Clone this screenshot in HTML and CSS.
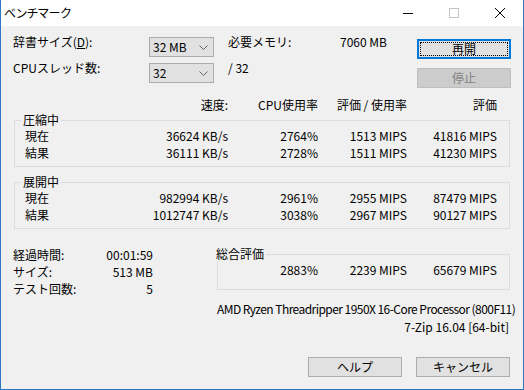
FILE: index.html
```html
<!DOCTYPE html>
<html>
<head>
    <title>ベンチマーク</title>
    <meta charset="utf-8" />

    <link rel="stylesheet" href="styles.css">

</head>
<body>

    <div id="window">

        <div class="title_bar">
            <span class="title_text">ベンチマーク</span>
            <div class="caption_buttons">
                <span class="caption_btn">
                    <svg width="10" height="10" viewBox="0 0 10 10"><line x1="0" y1="5.5" x2="10" y2="5.5" stroke="#000" stroke-width="1" /></svg>
                </span>
                <span class="caption_btn">
                    <svg width="10" height="10" viewBox="0 0 10 10"><rect x="0.5" y="0.5" width="9" height="9" fill="none" stroke="#c4c4c4" stroke-width="1" /></svg>
                </span>
                <span class="caption_btn">
                    <svg width="10" height="10" viewBox="0 0 10 10"><path d="M0 0 L10 10 M10 0 L0 10" stroke="#000" stroke-width="1" /></svg>
                </span>
            </div>
        </div>

        <div class="client">

            <div class="top_area">
                <div class="top_grid">
                    <span class="top_label">辞書サイズ(<u>D</u>):</span>
                    <div class="combo">
                        <span>32 MB</span>
                        <svg width="9" height="5" viewBox="0 0 9 5"><path d="M0.5 0.5 L4.5 4.5 L8.5 0.5" fill="none" stroke="#606060" stroke-width="1" /></svg>
                    </div>
                    <div class="mem_info">
                        <span>必要メモリ:</span>
                        <span>7060 MB</span>
                    </div>

                    <span class="top_label">CPUスレッド数:</span>
                    <div class="combo">
                        <span>32</span>
                        <svg width="9" height="5" viewBox="0 0 9 5"><path d="M0.5 0.5 L4.5 4.5 L8.5 0.5" fill="none" stroke="#606060" stroke-width="1" /></svg>
                    </div>
                    <div class="mem_info">
                        <span>/ 32</span>
                    </div>
                </div>

                <div class="top_buttons">
                    <button class="btn btn_default"><span class="focus_rect">再開</span></button>
                    <button class="btn" disabled>停止</button>
                </div>
            </div>

            <div class="results">
                <div class="cols head_row">
                    <span></span>
                    <span class="num">速度:</span>
                    <span class="num">CPU使用率</span>
                    <span class="num">評価 / 使用率</span>
                    <span class="num">評価</span>
                </div>

                <fieldset class="group">
                    <legend>圧縮中</legend>
                    <div class="cols">
                        <span>現在</span>
                        <span class="num">36624 KB/s</span>
                        <span class="num">2764%</span>
                        <span class="num">1513 MIPS</span>
                        <span class="num">41816 MIPS</span>
                    </div>
                    <div class="cols">
                        <span>結果</span>
                        <span class="num">36111 KB/s</span>
                        <span class="num">2728%</span>
                        <span class="num">1511 MIPS</span>
                        <span class="num">41230 MIPS</span>
                    </div>
                </fieldset>

                <fieldset class="group">
                    <legend>展開中</legend>
                    <div class="cols">
                        <span>現在</span>
                        <span class="num">982994 KB/s</span>
                        <span class="num">2961%</span>
                        <span class="num">2955 MIPS</span>
                        <span class="num">87479 MIPS</span>
                    </div>
                    <div class="cols">
                        <span>結果</span>
                        <span class="num">1012747 KB/s</span>
                        <span class="num">3038%</span>
                        <span class="num">2967 MIPS</span>
                        <span class="num">90127 MIPS</span>
                    </div>
                </fieldset>
            </div>

            <div class="bottom_area">
                <div class="stats">
                    <span>経過時間:</span>
                    <span class="num">00:01:59</span>
                    <span>サイズ:</span>
                    <span class="num">513 MB</span>
                    <span>テスト回数:</span>
                    <span class="num">5</span>
                </div>

                <fieldset class="group total_group">
                    <legend>総合評価</legend>
                    <div class="total_cols">
                        <span class="num">2883%</span>
                        <span class="num">2239 MIPS</span>
                        <span class="num">65679 MIPS</span>
                    </div>
                </fieldset>
            </div>

            <div class="cpu_line">AMD Ryzen Threadripper 1950X 16-Core Processor (800F11)</div>
            <div class="version_line">7-Zip 16.04 [64-bit]</div>

            <div class="footer">
                <button class="btn">ヘルプ</button>
                <button class="btn">キャンセル</button>
            </div>

        </div>

    </div>

</body>
</html>
```

FILE: styles.css
```css
body {
    margin: 0;
    font-family: "Noto Sans CJK JP", "Liberation Sans", sans-serif;
    font-size: 12px;
    color: #000;
}

#window {
    width: 522px;
    height: 389px;
    border: 1px solid #2b78c4;
    border-top: none;
    background: #f0f0f0;
    display: flex;
    flex-direction: column;
}

.title_bar {
    height: 26px;
    flex-shrink: 0;
    background: #fff;
    display: flex;
    align-items: center;
    justify-content: space-between;
}

.title_text {
    padding-left: 3px;
    font-feature-settings: "palt";
    line-height: 16px;
}

.caption_buttons {
    display: flex;
    height: 26px;
}

.caption_btn {
    width: 46px;
    display: flex;
    align-items: center;
    justify-content: center;
}

.client {
    padding: 0 13px 0 12px;
}

/* top settings */

.top_area {
    display: flex;
}

.top_grid {
    display: grid;
    grid-template-columns: 136px 65px 173px;
    grid-auto-rows: 20px;
    row-gap: 6px;
    padding-top: 11px;
    line-height: 10px;
}

.combo {
    height: 20px;
    box-sizing: border-box;
    border: 1px solid #acacac;
    background: #e1e1e1;
    display: flex;
    align-items: center;
    justify-content: space-between;
    padding: 0 5px 0 3px;
    line-height: 16px;
}

.mem_info {
    display: flex;
    justify-content: space-between;
    padding-left: 14px;
}

.top_buttons {
    margin-left: 30px;
    padding-top: 13px;
    display: flex;
    flex-direction: column;
    gap: 9px;
}

.btn {
    width: 94px;
    height: 20px;
    box-sizing: border-box;
    border: 1px solid #adadad;
    background: #e1e1e1;
    font-family: "Noto Sans CJK JP", "Liberation Sans", sans-serif;
    font-size: 12px;
    line-height: 16px;
    color: #000;
    padding: 0;
}

.btn_default {
    border: 2px solid #0078d7;
    padding: 1px;
}

.focus_rect {
    display: block;
    height: 100%;
    box-sizing: border-box;
    border: 1px dotted #000;
    line-height: 12px;
}

.btn:disabled {
    background: #cccccc;
    border-color: #bfbfbf;
    color: #838383;
}

/* results table */

.results {
    margin-left: 1px;
    margin-top: 8px;
}

.cols {
    display: grid;
    grid-template-columns: 60px 1fr 90px 89px 90px;
    line-height: 17px;
}

.head_row {
    padding: 0 13px 0 11px;
}

.num {
    text-align: right;
    white-space: nowrap;
}

.group {
    margin: 0;
    min-width: 0;
    border: 1px solid #dcdcdc;
    padding: 0 12px 5px 10px;
}

.group + .group {
    margin-top: 8px;
}

.group legend {
    padding: 0 2px;
    margin-left: -4px;
    line-height: 14px;
}

/* summary */

.bottom_area {
    display: grid;
    grid-template-columns: 140px 1fr;
    column-gap: 64px;
    align-items: start;
    margin-top: 15px;
}

.stats {
    display: grid;
    grid-template-columns: 1fr auto;
    grid-auto-rows: 17px;
    align-items: center;
    padding-top: 2px;
}

.total_group {
    margin-top: 3px;
    padding: 0 12px 11px 0;
}

.total_cols {
    display: grid;
    grid-template-columns: 1fr 89px 90px;
    line-height: 17px;
}

.cpu_line {
    margin-top: 3px;
    padding-left: 204px;
    line-height: 18px;
    letter-spacing: -0.55px;
    white-space: nowrap;
}

.version_line {
    text-align: right;
    padding-right: 1px;
    line-height: 18px;
}

.footer {
    display: flex;
    justify-content: flex-end;
    gap: 14px;
    margin-top: 21px;
}
```
